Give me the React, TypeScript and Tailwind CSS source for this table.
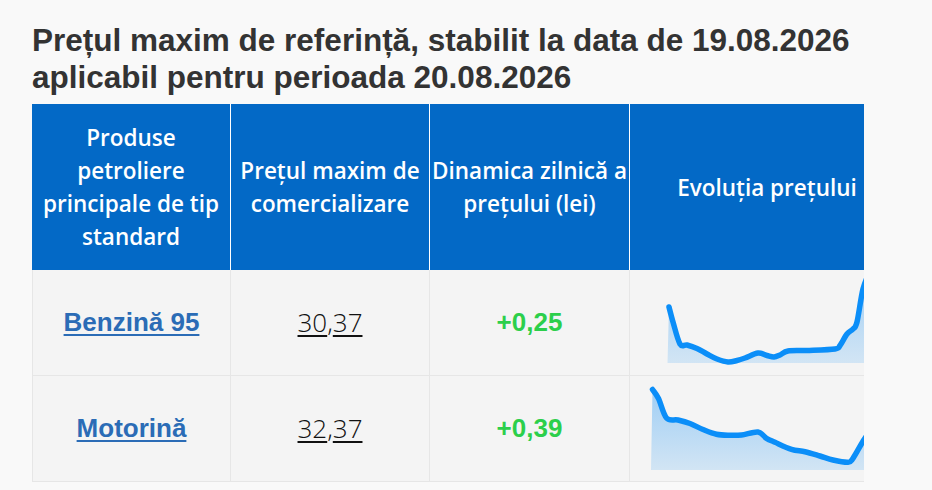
import React from 'react';

type Pt = [number, number];

// Datele graficelor (coordonate in pagina, folosite direct in viewBox)
const benzinaPts: Pt[] = [
  [669, 308], [673, 323], [680, 345], [687, 346], [697, 349.5], [707, 355],
  [717, 360], [728, 363], [737, 361.5], [745, 359], [758, 354], [767, 356.5],
  [774, 358], [780, 356], [788, 352], [807, 351.5], [835, 350], [840, 346.5],
  [847, 335], [853, 330], [857, 323], [863, 290], [870, 272],
];

const motorinaPts: Pt[] = [
  [652.5, 389.5], [658.5, 398.5], [666.5, 418], [678, 420], [690, 423.5],
  [703, 429.5], [716.5, 434.3], [730, 435.3], [741.5, 435], [758, 432],
  [766.5, 438.3], [775, 442.3], [791.5, 449.3], [805, 451.7], [820, 456],
  [833, 460], [848, 462.3], [853, 458.3], [863.3, 440.7], [872, 428],
];

const smoothPath = (pts: Pt[]) => {
  let d = `M${pts[0][0]},${pts[0][1]}`;
  for (let i = 0; i < pts.length - 1; i++) {
    const p0 = pts[i - 1] || pts[i];
    const p1 = pts[i];
    const p2 = pts[i + 1];
    const p3 = pts[i + 2] || p2;
    const c1x = p1[0] + (p2[0] - p0[0]) / 6;
    const c1y = p1[1] + (p2[1] - p0[1]) / 6;
    const c2x = p2[0] - (p3[0] - p1[0]) / 6;
    const c2y = p2[1] - (p3[1] - p1[1]) / 6;
    d += ` C${c1x},${c1y} ${c2x},${c2y} ${p2[0]},${p2[1]}`;
  }
  return d;
};

const Sparkline = ({
  id,
  pts,
  left,
  top,
  width,
  height,
  bottom,
}: {
  id: string;
  pts: Pt[];
  left: number;
  top: number;
  width: number;
  height: number;
  bottom: number;
}) => {
  const line = smoothPath(pts);
  const last = pts[pts.length - 1];
  const area = `${line} L${last[0]},${bottom} L${pts[0][0] - 1.5},${bottom} Z`;
  return (
    <svg
      width={width}
      height={height}
      viewBox={`${left} ${top} ${width} ${height}`}
      className="block mx-auto overflow-visible"
    >
      <defs>
        <linearGradient id={id} x1="0" y1="0" x2="0" y2="1">
          <stop offset="0" stopColor="#4aa8f5" stopOpacity="0.5" />
          <stop offset="1" stopColor="#4aa8f5" stopOpacity="0.2" />
        </linearGradient>
      </defs>
      <path d={area} fill={`url(#${id})`} />
      <path d={line} fill="none" stroke="#0b8ef8" strokeWidth="5.5" strokeLinecap="round" strokeLinejoin="round" />
    </svg>
  );
};

const Price = ({ whole, cents }: { whole: string; cents: string }) => (
  <span className="text-[26px] font-light text-[#111111]">
    <span className="underline decoration-2 underline-offset-[3px]">{whole}</span>,
    <span className="underline decoration-2 underline-offset-[3px]">{cents}</span>
  </span>
);

const rows = [
  {
    name: 'Benzină 95',
    whole: '30',
    cents: '37',
    delta: '+0,25',
    chart: <Sparkline id="g1" pts={benzinaPts} left={667} top={282} width={200} height={84} bottom={364} />,
  },
  {
    name: 'Motorină',
    whole: '32',
    cents: '37',
    delta: '+0,39',
    chart: <Sparkline id="g2" pts={motorinaPts} left={651} top={384} width={232} height={90} bottom={470} />,
  },
];

const thCls =
  "bg-[#0369c6] text-white font-semibold text-[22.5px] leading-[33px] px-[1px] py-[17px] text-center align-middle border-r border-white";

export default function App() {
  return (
    <div className="min-h-[490px] bg-[#f9f9f9] pt-[22px] font-['Open_Sans',sans-serif]">
      <h1 className="ml-[32px] mb-[8px] font-['Liberation_Sans',Arial,sans-serif] text-[31.5px] leading-[37px] font-bold text-[#333333]">
        Prețul maxim de referință, stabilit la data de 19.08.2026
        <br />
        aplicabil pentru perioada 20.08.2026
      </h1>

      <div className="ml-[32px] w-[832px] overflow-hidden">
        <table className="w-[872px] table-fixed border-separate border-spacing-0">
          <thead>
            <tr>
              <th className={`${thCls} w-[199px]`}>Produse petroliere principale de tip standard</th>
              <th className={`${thCls} w-[199px]`}>Prețul maxim de comercializare</th>
              <th className={`${thCls} w-[200px]`}>Dinamica zilnică a prețului (lei)</th>
              <th className={`${thCls} w-[274px] border-r-0`}>Evoluția prețului</th>
            </tr>
          </thead>
          <tbody>
            {rows.map((row) => (
              <tr key={row.name}>
                <td className="h-[106px] bg-[#f4f4f4] border-l border-r border-b border-[#e6e6e6] text-center align-middle">
                  <a
                    href="#"
                    className="font-['Liberation_Sans',Arial,sans-serif] font-bold text-[26px] text-[#2b6cb6] underline decoration-2 underline-offset-[3px]"
                  >
                    {row.name}
                  </a>
                </td>
                <td className="h-[106px] bg-[#f4f4f4] border-r border-b border-[#e6e6e6] text-center align-middle">
                  <Price whole={row.whole} cents={row.cents} />
                </td>
                <td className="h-[106px] bg-[#f4f4f4] border-r border-b border-[#e6e6e6] text-center align-middle">
                  <span className="font-['Liberation_Sans',Arial,sans-serif] font-bold text-[26px] text-[#2ccf4b]">
                    {row.delta}
                  </span>
                </td>
                <td className="h-[106px] bg-[#f4f4f4] border-b border-[#e6e6e6] align-middle p-0">{row.chart}</td>
              </tr>
            ))}
          </tbody>
        </table>
      </div>
    </div>
  );
}
